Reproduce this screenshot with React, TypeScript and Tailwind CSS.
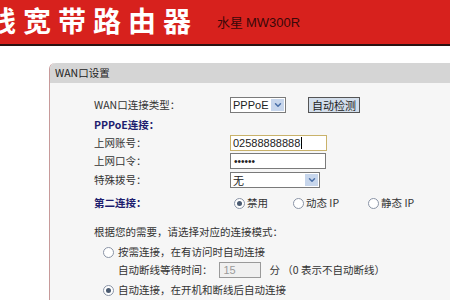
import { ChevronDown } from "lucide-react";

const cjk = { fontFamily: '"Noto Sans CJK SC", "Liberation Sans", sans-serif' };
const latin = { fontFamily: '"Liberation Sans", "Noto Sans CJK SC", sans-serif' };

function Radio({ checked }: { checked?: boolean }) {
  return (
    <span className="inline-flex h-[11px] w-[11px] shrink-0 items-center justify-center rounded-full border border-[#8a94a6] bg-white">
      {checked && <span className="h-[5px] w-[5px] rounded-full bg-[#4a5a70]" />}
    </span>
  );
}

function SelectBox({ value, width }: { value: string; width: string }) {
  return (
    <div
      className={`flex h-[16px] ${width} items-center justify-between border border-[#7a7a7a] bg-white pl-[2px] pr-[1px] text-[11px] text-[#222]`}
    >
      <span>{value}</span>
      <span className="flex h-[12px] w-[13px] items-center justify-center bg-[#c7d6ec]">
        <ChevronDown size={10} strokeWidth={3.5} color="#4a6fa8" />
      </span>
    </div>
  );
}

function Label({ children, bold }: { children: React.ReactNode; bold?: boolean }) {
  return (
    <span
      className={`w-[136px] shrink-0 ${bold ? "font-bold text-[#1d1d6e]" : "text-[#333]"}`}
    >
      {children}
    </span>
  );
}

export default function App() {
  return (
    <div className="h-[300px] w-[450px] overflow-hidden bg-white" style={cjk}>
      <header className="flex h-[46px] items-center overflow-hidden border-b-2 border-[#2a1212] bg-[#d7211d]">
        <span className="ml-[-12px] whitespace-nowrap pb-[4px] text-[28px] font-bold tracking-[7px] text-white">
          线宽带路由器
        </span>
        <span className="ml-[19px] text-[13px] text-[#3a0808]">
          水星 <span style={latin}>MW300R</span>
        </span>
      </header>

      <section className="ml-[49px] mt-[17px] min-h-[260px] w-[420px] rounded-tl-[6px] border-l border-[#c79a9a] bg-[#f6f6f6]">
        <div className="flex h-[20px] items-center rounded-tl-[6px] bg-[#d5d5d5] pl-[5px] text-[10.5px] text-[#222]">
          WAN口设置
        </div>

        <div className="flex flex-col pl-[44px] text-[10.5px] text-[#333]">
          <div className="mt-[14px] flex h-[16px] items-center">
            <Label>WAN口连接类型：</Label>
            <div style={latin}>
              <SelectBox value="PPPoE" width="w-[56px]" />
            </div>
            <button className="ml-[22px] h-[16px] border border-[#555] bg-[#d3deeb] px-[3px] text-[11px] leading-[14px] text-[#222]">
              自动检测
            </button>
          </div>

          <div className="mt-[4px] flex h-[16px] items-center">
            <Label bold>PPPoE连接：</Label>
          </div>

          <div className="mt-[2px] flex h-[16px] items-center">
            <Label>上网账号：</Label>
            <div
              className="flex h-[16px] w-[97px] items-center border border-[#c9b26a] bg-white pl-[2px] text-[11px] text-[#222]"
              style={latin}
            >
              02588888888<span className="ml-[1px] h-[12px] w-px bg-black" />
            </div>
          </div>

          <div className="mt-[2px] flex h-[16px] items-center">
            <Label>上网口令：</Label>
            <div
              className="flex h-[16px] w-[96px] items-center border border-[#7a7a7a] bg-white pl-[3px] text-[10px] text-[#222]"
              style={latin}
            >
              ••••••
            </div>
          </div>

          <div className="mt-[3px] flex h-[16px] items-center">
            <Label>特殊拨号：</Label>
            <SelectBox value="无" width="w-[90px]" />
          </div>

          <div className="mt-[7px] flex h-[16px] items-center">
            <Label bold>第二连接：</Label>
            <div className="flex items-center gap-[2px] pl-[4px]">
              <Radio checked />
              <span>禁用</span>
            </div>
            <div className="ml-[25px] flex items-center gap-[2px]">
              <Radio />
              <span>动态 IP</span>
            </div>
            <div className="ml-[29px] flex items-center gap-[2px]">
              <Radio />
              <span>静态 IP</span>
            </div>
          </div>

          <div className="mt-[13px] flex h-[16px] items-center">
            根据您的需要，请选择对应的连接模式：
          </div>

          <div className="mt-[4px] flex h-[16px] items-center gap-[4px] pl-[9px]">
            <Radio />
            <span>按需连接，在有访问时自动连接</span>
          </div>

          <div className="mt-[2px] flex h-[16px] items-center pl-[24px]">
            <span>自动断线等待时间：</span>
            <div
              className="ml-[6px] flex h-[16px] w-[42px] items-center border border-[#9a9a9a] bg-[#f0f0f0] pl-[4px] text-[11px] text-[#9a9a9a]"
              style={latin}
            >
              15
            </div>
            <span className="ml-[9px]">分 （0 表示不自动断线）</span>
          </div>

          <div className="mt-[4px] flex h-[16px] items-center gap-[4px] pl-[9px]">
            <Radio checked />
            <span>自动连接，在开机和断线后自动连接</span>
          </div>
        </div>
      </section>
    </div>
  );
}
